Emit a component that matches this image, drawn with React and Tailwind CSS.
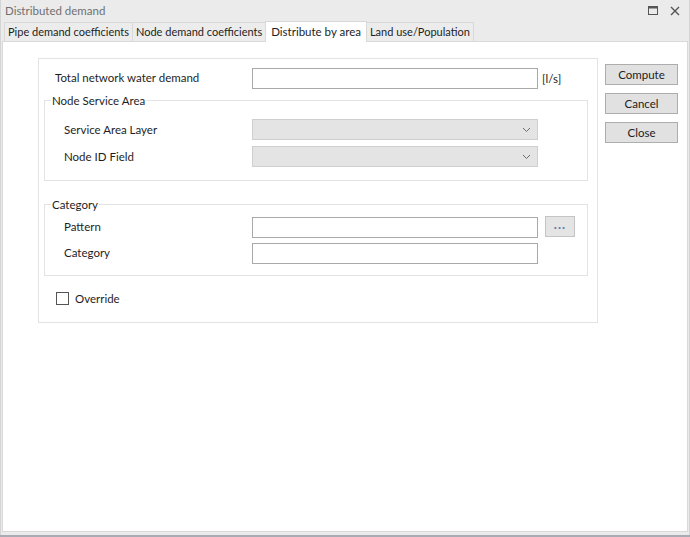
import { useState } from "react";

const font = { fontFamily: 'Lato, "Liberation Sans", Arial, sans-serif' };

const tabs = [
  "Pipe demand coefficients",
  "Node demand coefficients",
  "Distribute by area",
  "Land use/Population",
];

const Chevron = () => (
  <svg width="9" height="6" viewBox="0 0 9 6" className="text-[#6b6b6b]">
    <path d="M1 1l3.5 3.5L8 1" fill="none" stroke="currentColor" strokeWidth="1" />
  </svg>
);

const TextBox = ({ className = "" }) => (
  <input
    type="text"
    className={`h-[21px] w-[286px] border border-[#a9a9a9] bg-white px-1 text-[11px] outline-none ${className}`}
  />
);

const ComboBox = () => (
  <div className="flex h-[21px] w-[286px] items-center justify-end border border-[#cfcfcf] bg-[#e4e4e4] pr-[6px]">
    <Chevron />
  </div>
);

const DlgButton = ({ children }) => (
  <button className="h-[21px] w-[73px] border border-[#adadad] bg-[#e1e1e1] text-[11.5px] text-[#222]">
    {children}
  </button>
);

const App = () => {
  const [active, setActive] = useState(2);
  const [override, setOverride] = useState(false);

  return (
    <div className="h-[537px] w-[690px] overflow-hidden bg-[#a8abb4] text-[11.5px] text-[#1e1e1e]" style={font}>
      <div className="flex h-[535px] flex-col border-x border-[#d4d4d4] bg-[#ebebeb]">
        {/* Title bar */}
        <div className="flex h-[21px] items-center justify-between pl-[4px] pr-[9px]">
          <span className="text-[#707070]">Distributed demand</span>
          <div className="flex items-center gap-[12px]">
            <svg width="10" height="9" viewBox="0 0 10 9">
              <rect x="0.5" y="0.5" width="9" height="8" fill="none" stroke="#555" strokeWidth="1" />
              <rect x="0.5" y="0.5" width="9" height="2" fill="#555" />
            </svg>
            <svg width="10" height="10" viewBox="0 0 10 10">
              <path d="M1 1l8 8M9 1l-8 8" stroke="#555" strokeWidth="1.4" />
            </svg>
          </div>
        </div>

        {/* Tabs */}
        <div className="flex h-[20px] items-end pl-[3px]">
          {tabs.map((t, i) => (
            <button
              key={t}
              onClick={() => setActive(i)}
              className={
                i === active
                  ? "relative z-10 -mb-px -ml-px h-[21px] border border-b-0 border-[#d9d9d9] bg-white px-[5px] text-[11.5px] text-[#1e1e1e]"
                  : "h-[19px] border border-b-0 border-[#d9d9d9] bg-[#ececec] px-[3px] text-[11px] text-[#1e1e1e] -ml-px first:ml-0"
              }
            >
              {t}
            </button>
          ))}
        </div>

        {/* Tab page */}
        <div className="mx-[1px] mb-[3px] flex flex-1 items-start border border-[#d9d9d9] bg-white">
          <div className="ml-[35px] mt-[16px] h-[265px] w-[560px] border border-[#e3e3e3] pl-[5px] pt-[9px]">
            {/* Total demand */}
            <div className="flex items-center">
              <span className="w-[208px] pl-[11px] -mt-[2px]">Total network water demand</span>
              <TextBox />
              <span className="ml-[4px]">[l/s]</span>
            </div>

            {/* Node Service Area */}
            <fieldset className="mt-[3px] w-[544px] border border-[#e3e3e3] pb-[13px] pl-[19px]">
              <legend className="-ml-[13px] px-[1px]">Node Service Area</legend>
              <div className="mt-[10px] flex items-center">
                <span className="w-[188px]">Service Area Layer</span>
                <ComboBox />
              </div>
              <div className="mt-[6px] flex items-center">
                <span className="w-[188px]">Node ID Field</span>
                <ComboBox />
              </div>
            </fieldset>

            {/* Category */}
            <fieldset className="mt-[15px] w-[544px] border border-[#e3e3e3] pb-[11px] pl-[19px]">
              <legend className="-ml-[13px] px-[1px]">Category</legend>
              <div className="mt-[3px] flex items-center">
                <span className="w-[188px]">Pattern</span>
                <TextBox />
                <button className="ml-[7px] -mt-[2px] flex h-[21px] w-[30px] items-center justify-center border border-[#c4c4c4] bg-[#e4e4e4] pb-[3px] text-[13px] font-bold leading-none tracking-[1px] text-[#6a78a8]">
                  ...
                </button>
              </div>
              <div className="mt-[5px] flex items-center">
                <span className="w-[188px]">Category</span>
                <TextBox />
              </div>
            </fieldset>

            {/* Override */}
            <label className="ml-[12px] mt-[14px] flex items-center gap-[6px]">
              <input
                type="checkbox"
                checked={override}
                onChange={(e) => setOverride(e.target.checked)}
                className="h-[13px] w-[13px] appearance-none border border-[#555] bg-white checked:bg-[#555]"
              />
              <span>Override</span>
            </label>
          </div>

          {/* Buttons */}
          <div className="ml-[7px] mt-[22px] flex flex-col gap-[8px]">
            <DlgButton>Compute</DlgButton>
            <DlgButton>Cancel</DlgButton>
            <DlgButton>Close</DlgButton>
          </div>
        </div>
      </div>
    </div>
  );
};

export default App;
